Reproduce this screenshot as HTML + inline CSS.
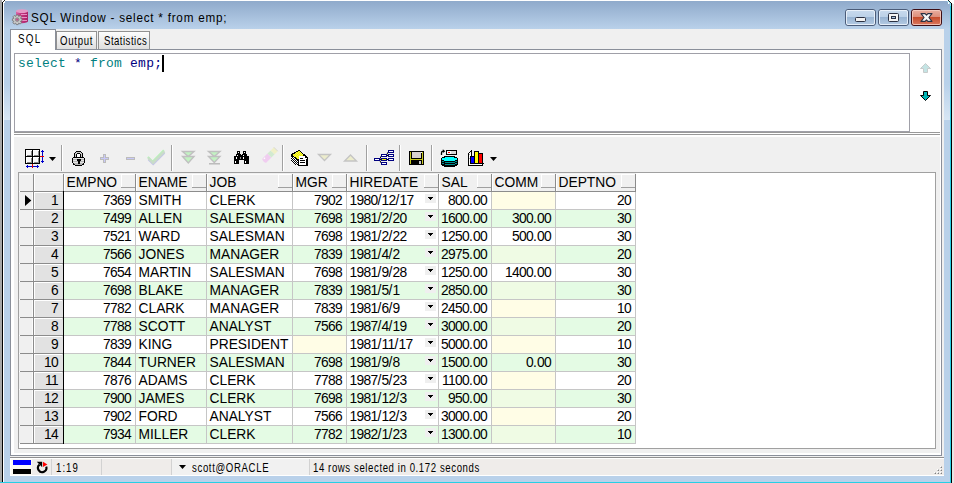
<!DOCTYPE html>
<html><head><meta charset="utf-8">
<style>
*{margin:0;padding:0;box-sizing:border-box}
html,body{width:954px;height:483px;overflow:hidden;background:#b9d1ea;font-family:"Liberation Sans",sans-serif}
.a{position:absolute}
#frame{left:0;top:0;width:954px;height:483px;background:#b9d1ea}
#title{left:4;top:1px;width:946px;height:28px;background:linear-gradient(#90abcb,#b9d1ea)}
.ttext{left:31px;top:10px;font-size:13px;letter-spacing:.85px;transform:scaleX(.9);transform-origin:0 0;color:#000;white-space:nowrap}
.wbtn{top:9px;height:17px;border:1px solid #4e6384;border-radius:3px;background:linear-gradient(#d5e3f1 0,#c5d8ec 50%,#a9c2de 50%,#b8cfe6 100%);box-shadow:inset 0 0 0 1px rgba(255,255,255,.55)}
.wbtn.close{border-color:#4a1515;background:linear-gradient(#e9a797 0,#df8b77 50%,#c4472c 50%,#d46e53 100%)}
.tab{font-size:12px;line-height:14px;color:#000;white-space:nowrap;transform:scaleX(.89);transform-origin:0 0}
.line{position:absolute}
.gc{position:absolute;font-size:13.8px;white-space:nowrap;color:#000;line-height:18px}
.r{text-align:right}
.gc i{font-style:normal;letter-spacing:-.674px}
.gc b{font-weight:normal;letter-spacing:.166px}
.sb{position:absolute;font-size:12px;line-height:14px;white-space:nowrap;color:#000;transform:scaleX(.89);transform-origin:0 0}
</style></head><body>
<div class="a" id="frame"></div>
<!-- outer left strip -->
<div class="a" style="left:0;top:0;width:2px;height:483px;background:#a8a8a8"></div>
<div class="a" style="left:2px;top:2px;width:1px;height:481px;background:#000"></div>
<div class="a" style="left:3px;top:3px;width:1px;height:480px;background:#fff"></div>
<div class="a" style="left:5px;top:0;width:945px;height:1px;background:#fff"></div>
<!-- right strip -->
<div class="a" style="left:950px;top:2px;width:1px;height:481px;background:#27cfe5"></div>
<div class="a" style="left:951px;top:2px;width:1px;height:481px;background:#000"></div>
<div class="a" style="left:952px;top:0;width:2px;height:483px;background:#e6e6e6"></div>
<div class="a" style="left:0;top:482px;width:951px;height:1px;background:#27cfe5"></div>
<div class="a" style="left:4px;top:84px;width:6px;height:36px;background:linear-gradient(#b9d1ea,#d8e6f4)"></div>
<div class="a" style="left:944px;top:84px;width:6px;height:36px;background:linear-gradient(#b9d1ea,#d8e6f4)"></div>
<!-- title gradient -->
<div class="a" style="left:4px;top:1px;width:946px;height:28px;background:linear-gradient(#8faacb,#b9d1ea)"></div>
<svg class="a" style="left:10px;top:7px" width="22" height="22" viewBox="0 0 22 22">
<defs><linearGradient id="cyl" x1="0" x2="1"><stop offset="0" stop-color="#d866a6"/><stop offset=".35" stop-color="#c83a84"/><stop offset="1" stop-color="#a82266"/></linearGradient></defs>
<path d="M6 4.2 V14.2 A6 2 0 0 0 18 14.2 V4.2 Z" fill="url(#cyl)"/>
<ellipse cx="12" cy="4.2" rx="6" ry="1.9" fill="#e49ac6"/>
<path d="M11 7.5h6M11 10.5h6M11 13.5h6" stroke="#e890c4" stroke-width="1"/>
<g transform="translate(7.2 12.6) scale(.93)">
<path d="M-1 -5h2l.6 1.6 1.6-1 1.4 1.4-1 1.6 1.6.6v2l-1.6.6 1 1.6-1.4 1.4-1.6-1-.6 1.6h-2l-.6-1.6-1.6 1-1.4-1.4 1-1.6-1.6-.6v-2l1.6-.6-1-1.6 1.4-1.4 1.6 1z" fill="#c8c8c8" stroke="#6a6a6a" stroke-width=".8"/>
<circle r="2" fill="#a0a0a0" stroke="#707070" stroke-width=".6"/>
<circle r="1.1" fill="#d04090"/>
</g></svg>
<svg class="a" style="left:0;top:0" width="954" height="6" shape-rendering="crispEdges">
<rect x="2" y="0" width="3" height="3" fill="#fff"/><rect x="4" y="0" width="1" height="1" fill="#202020"/><rect x="3" y="1" width="1" height="1" fill="#202020"/><rect x="2" y="2" width="1" height="1" fill="#000"/>
<rect x="948" y="0" width="6" height="4" fill="#fff"/><rect x="948" y="0" width="1" height="1" fill="#202020"/><rect x="949" y="1" width="1" height="1" fill="#202020"/><rect x="950" y="2" width="1" height="1" fill="#202020"/><rect x="951" y="3" width="1" height="1" fill="#000"/>
<rect x="947" y="1" width="2" height="1" fill="#a8e4f4"/><rect x="949" y="2" width="1" height="2" fill="#a8e4f4"/><rect x="950" y="3" width="1" height="3" fill="#80dcf2"/>
</svg>
<div class="a ttext">SQL Window - select * from emp;</div>
<svg class="a" style="left:840px;top:5px" width="106" height="24" viewBox="840 5 106 24">
<defs>
<linearGradient id="bb" x1="0" y1="0" x2="0" y2="1"><stop offset="0" stop-color="#c9dbee"/><stop offset=".45" stop-color="#bcd1e8"/><stop offset=".46" stop-color="#97b3d2"/><stop offset="1" stop-color="#b6cce4"/></linearGradient>
<linearGradient id="bc" x1="0" y1="0" x2="0" y2="1"><stop offset="0" stop-color="#eab0a2"/><stop offset=".45" stop-color="#dd8f7c"/><stop offset=".46" stop-color="#c44a2a"/><stop offset="1" stop-color="#dc7a62"/></linearGradient>
</defs>
<rect x="845.5" y="9.5" width="30" height="16" rx="2.5" fill="url(#bb)" stroke="#4b5c79"/>
<rect x="846.5" y="10.5" width="28" height="14" rx="1.5" fill="none" stroke="#eef4fb" stroke-opacity=".85"/>
<rect x="878.5" y="9.5" width="30" height="16" rx="2.5" fill="url(#bb)" stroke="#4b5c79"/>
<rect x="879.5" y="10.5" width="28" height="14" rx="1.5" fill="none" stroke="#eef4fb" stroke-opacity=".85"/>
<rect x="911.5" y="9.5" width="30" height="16" rx="2.5" fill="url(#bc)" stroke="#3d0d14"/>
<rect x="912.5" y="10.5" width="28" height="14" rx="1.5" fill="none" stroke="#f6d0c6" stroke-opacity=".8"/>
<rect x="855.5" y="17.5" width="10" height="4" rx="1" fill="#f2f2f2" stroke="#2b3142"/>
<rect x="888.5" y="13.5" width="10" height="8" rx="1" fill="#f4f4f4" stroke="#2b3142"/>
<rect x="891.5" y="16.5" width="4" height="2" fill="#a9c4e0" stroke="#2b3142"/>
<path d="M921 13.6H925.1L926.5 15.2 927.9 13.6H932L928.9 17.5 932 21.4H927.9L926.5 19.8 925.1 21.4H921L924.1 17.5Z" fill="#f8f8f8" stroke="#2b3042" stroke-width="1.1" stroke-linejoin="round"/>
</svg>
<!-- tab strip bg -->
<div class="a" style="left:10px;top:29px;width:934px;height:447px;background:#f0f0f0"></div>
<!-- tabs -->
<div class="a" style="left:56px;top:31px;width:41px;height:19px;border:1px solid #919191;border-bottom:none;background:linear-gradient(#fdfdfd,#dcdcdc)"></div>
<div class="a tab" style="left:60px;top:34px;transform:scaleX(.8);letter-spacing:.9px">Output</div>
<div class="a" style="left:98px;top:31px;width:52px;height:19px;border:1px solid #919191;border-bottom:none;background:linear-gradient(#fdfdfd,#dcdcdc)"></div>
<div class="a tab" style="left:104px;top:34px;transform:scaleX(.8);letter-spacing:.6px">Statistics</div>
<!-- panel -->
<div class="a" style="left:10px;top:49px;width:932px;height:407px;border:1px solid #8a8f9a;background:#f0f0f0"></div>
<div class="a" style="left:10px;top:29px;width:46px;height:22px;border:1px solid #8a8f9a;border-bottom:none;background:#fff"></div>
<div class="a tab" style="left:18px;top:32px;transform:scaleX(.82);letter-spacing:1.5px">SQL</div>
<!-- upper pane -->
<div class="a" style="left:11px;top:50px;width:930px;height:405px;background:#fff"></div>
<div class="a" style="left:14px;top:137px;width:926px;height:316px;background:#f0f0f0"></div>
<div class="a" style="left:14px;top:53px;width:896px;height:79px;border:1px solid #a0a0a8;background:#fff"></div>
<div class="a" style="left:14px;top:132px;width:926px;height:1px;background:#999"></div>
<div class="a" style="left:14px;top:134px;width:926px;height:1px;background:#999"></div>
<div class="a" style="left:18px;top:56px;font-family:'Liberation Mono',monospace;font-size:12px;letter-spacing:.21px;transform:scaleX(1.08);transform-origin:0 0;line-height:16px;white-space:pre"><span style="color:#008080">select</span> <span style="color:#000080">*</span> <span style="color:#008080">from</span> <span style="color:#000080">emp;</span></div>
<div class="a" style="left:162px;top:55px;width:2px;height:17px;background:#000"></div>

<svg class="a" style="left:914px;top:58px" width="24" height="48" viewBox="914 58 24 48">
<path d="M920.5 68.5L925.5 63.5 930.5 68.5H927.5V72.5H923.5V68.5Z" fill="#c4e4e4" stroke="#c8cccc" stroke-width="1"/>
<path d="M923.5 91.5H927.5V95.5H930.5L925.5 100.5 920.5 95.5H923.5Z" fill="#00b4b4" stroke="#000" stroke-width="1" stroke-linejoin="miter"/>
</svg>
<svg class="a" style="left:0;top:140px" width="520" height="32" viewBox="0 140 520 32" shape-rendering="crispEdges">
<!-- separators -->
<g fill="#a0a0a0"><rect x="61" y="145" width="1" height="26"/><rect x="171" y="145" width="1" height="26"/><rect x="282" y="145" width="1" height="26"/><rect x="366" y="145" width="1" height="26"/><rect x="399" y="145" width="1" height="26"/><rect x="431" y="145" width="1" height="26"/></g>
<g fill="#fff"><rect x="62" y="145" width="1" height="26"/><rect x="172" y="145" width="1" height="26"/><rect x="283" y="145" width="1" height="26"/><rect x="367" y="145" width="1" height="26"/><rect x="400" y="145" width="1" height="26"/><rect x="432" y="145" width="1" height="26"/></g>
<!-- grid icon -->
<rect x="25" y="149" width="15" height="15" fill="#000"/>
<g fill="#fff"><rect x="26" y="150" width="6" height="6"/><rect x="33" y="150" width="6" height="6"/><rect x="26" y="157" width="6" height="6"/><rect x="33" y="157" width="6" height="6"/></g>
<g fill="#8a8a8a"><rect x="27" y="155" width="5" height="1"/><rect x="31" y="151" width="1" height="5"/><rect x="34" y="155" width="5" height="1"/><rect x="38" y="151" width="1" height="5"/><rect x="27" y="162" width="5" height="1"/><rect x="31" y="158" width="1" height="5"/><rect x="34" y="162" width="5" height="1"/><rect x="38" y="158" width="1" height="5"/></g>
<g fill="#f8f8f8"><rect x="27" y="151" width="4" height="4"/><rect x="34" y="151" width="4" height="4"/><rect x="27" y="158" width="4" height="4"/><rect x="34" y="158" width="4" height="4"/></g>
<g fill="#0000cc"><rect x="42" y="150" width="1" height="13"/><rect x="41" y="151" width="3" height="1"/><rect x="41" y="161" width="3" height="1"/><rect x="26" y="166" width="13" height="1"/><rect x="27" y="165" width="1" height="3"/><rect x="37" y="165" width="1" height="3"/></g>
<g fill="#e00000"><rect x="40" y="156" width="4" height="1"/><rect x="32" y="164" width="1" height="4"/></g>
<path d="M49 157H56L52.5 161Z" fill="#000" shape-rendering="auto"/>
<!-- lock -->
<rect x="75" y="152" width="7" height="5" fill="#c8c8c8"/><rect x="77" y="154" width="3" height="3" fill="#fff"/><rect x="76" y="151" width="5" height="1" fill="#000"/><rect x="75" y="152" width="1" height="1" fill="#000"/><rect x="81" y="152" width="1" height="1" fill="#000"/><rect x="74" y="153" width="1" height="4" fill="#000"/><rect x="82" y="153" width="1" height="4" fill="#000"/><rect x="77" y="153" width="3" height="1" fill="#000"/><rect x="76" y="154" width="1" height="3" fill="#000"/><rect x="80" y="154" width="1" height="3" fill="#000"/><rect x="73" y="158" width="11" height="6" fill="#b4b4b4"/><rect x="73" y="158" width="11" height="1" fill="#e4e4e4"/><rect x="73" y="160" width="11" height="1" fill="#e4e4e4"/><rect x="73" y="162" width="11" height="1" fill="#e4e4e4"/><rect x="74" y="164" width="9" height="1" fill="#b4b4b4"/><rect x="73" y="157" width="11" height="1" fill="#000"/><rect x="72" y="158" width="1" height="5" fill="#000"/><rect x="84" y="158" width="1" height="5" fill="#000"/><rect x="73" y="163" width="1" height="1" fill="#000"/><rect x="83" y="163" width="1" height="1" fill="#000"/><rect x="73" y="164" width="2" height="1" fill="#000"/><rect x="82" y="164" width="2" height="1" fill="#000"/><rect x="75" y="165" width="7" height="1" fill="#000"/><rect x="77" y="159" width="4" height="2" fill="#000"/><rect x="78" y="161" width="2" height="3" fill="#000"/>
<!-- plus / minus -->
<rect x="103" y="154" width="3" height="9" fill="#bcbcbc"/><rect x="100" y="157" width="9" height="3" fill="#bcbcbc"/>
<rect x="104" y="155" width="1" height="7" fill="#c8c8f8"/><rect x="101" y="158" width="7" height="1" fill="#c8c8f8"/>
<rect x="126" y="157" width="9" height="3" fill="#bcbcbc"/><rect x="127" y="158" width="7" height="1" fill="#c8c8f8"/>
<!-- check -->
<g shape-rendering="auto" fill="none" stroke-linecap="square">
<path d="M149.2 160.2L153.2 164.2 163.8 153.6" stroke="#c4c4ea" stroke-width="2"/>
<path d="M148.6 157.6L152.6 161.6 163.2 151" stroke="#b8f2b8" stroke-width="2"/>
<path d="M149 158.8L153 162.8 163.6 152.2" stroke="#c9dcc9" stroke-width="2.4"/>
</g>
<!-- double triangles -->
<g shape-rendering="auto" stroke="#c0c0c0" stroke-width="1.4" fill="#c2f2c2" stroke-linejoin="miter">
<path d="M182.5 151.5H194L188.3 156.5Z"/><path d="M182.5 156.5H194L188.3 163Z"/>
<path d="M208.5 151.5H220L214.3 156.5Z"/><path d="M208.5 156.5H220L214.3 162.5Z"/>
</g>
<rect x="209" y="163" width="11" height="1" fill="#bcbcbc"/><rect x="209" y="164" width="11" height="1" fill="#d4d4d4"/>
<!-- binoculars -->
<rect x="237" y="151" width="3" height="3" fill="#000"/><rect x="243" y="151" width="3" height="3" fill="#000"/><rect x="236" y="154" width="5" height="2" fill="#000"/><rect x="242" y="154" width="5" height="2" fill="#000"/><rect x="241" y="155" width="1" height="1" fill="#000"/><rect x="234" y="156" width="5" height="8" fill="#000"/><rect x="244" y="156" width="5" height="8" fill="#000"/><rect x="239" y="156" width="5" height="4" fill="#000"/><rect x="238" y="152" width="1" height="1" fill="#fff"/><rect x="244" y="152" width="1" height="1" fill="#fff"/><rect x="237" y="155" width="1" height="1" fill="#fff"/><rect x="243" y="155" width="1" height="1" fill="#fff"/><rect x="236" y="157" width="1" height="1" fill="#fff"/><rect x="236" y="158" width="1" height="1" fill="#fff"/><rect x="243" y="157" width="1" height="1" fill="#fff"/><rect x="243" y="158" width="1" height="1" fill="#fff"/><rect x="235" y="161" width="1" height="1" fill="#fff"/><rect x="235" y="162" width="1" height="1" fill="#fff"/><rect x="245" y="161" width="1" height="1" fill="#fff"/><rect x="245" y="162" width="1" height="1" fill="#fff"/><rect x="240" y="157" width="1" height="2" fill="#909090"/>
<!-- eraser (disabled) -->
<g shape-rendering="auto" transform="translate(270.5 154.5) rotate(-45)">
<path d="M-8.5 -2.8H-1.5V2.8H-8.5Q-9.8 2.8 -9.8 0Q-9.8 -2.8 -8.5 -2.8Z" fill="#f0cdf0"/>
<rect x="-1.5" y="-2.8" width="4.5" height="5.6" fill="#d2ead0"/>
<rect x="3" y="-2.8" width="4.5" height="5.6" fill="#f0f0c8"/>
<path d="M7.5 -2.8V2.8M-8 -1.2H-6" stroke="#d0d0d0" stroke-width=".8"/>
<path d="M-8 -1.5H-6" stroke="#fff" stroke-width="1"/>
</g>
<!-- stack of papers -->
<defs><pattern id="chk" width="2" height="2" patternUnits="userSpaceOnUse"><rect width="1" height="1" fill="#fff"/><rect x="1" y="1" width="1" height="1" fill="#fff"/></pattern></defs>
<path d="M291 154L299 150 308 157V166H298L291 162Z" fill="#000"/>
<path d="M292 155L299 151 304 155 298 159Z" fill="#f0f000"/>
<path d="M292 155L299 151 304 155 298 159Z" fill="url(#chk)" opacity=".3"/>
<path d="M291 156L298 160V166L291 162Z" fill="url(#chk)"/>
<rect x="299" y="156" width="7" height="9" fill="#fff"/>
<rect x="305" y="156" width="1" height="2" fill="#000"/><rect x="306" y="158" width="1" height="1" fill="#fff"/>
<rect x="300" y="158" width="3" height="1" fill="#000"/>
<rect x="300" y="160" width="5" height="1" fill="#000"/>
<rect x="300" y="162" width="5" height="1" fill="#000"/>
<!-- up/down triangles disabled -->
<g shape-rendering="auto" stroke="#c4c4c4" stroke-width="1.3" fill="#ececcc">
<path d="M318.5 154.5H330.5L324.5 160.5Z"/>
<path d="M344.5 161H356.5L350.5 155Z"/>
</g>
<!-- tree -->
<g shape-rendering="auto" stroke="#000" stroke-width="1" fill="none">
<path d="M379.5 159.5L381.5 155.5M379.5 159.5H381M379.5 160L381.5 163.5M386.5 155.5H388M386.5 159.5H388M386.5 155L388.5 151.5"/>
</g>
<g fill="#000080">
<rect x="374" y="158" width="6" height="3"/><rect x="381" y="154" width="6" height="3"/><rect x="381" y="158" width="6" height="3"/><rect x="381" y="162" width="6" height="3"/>
<rect x="388" y="150" width="6" height="3"/><rect x="388" y="154" width="6" height="3"/><rect x="388" y="158" width="6" height="3"/>
</g>
<g fill="#fff">
<rect x="375" y="159" width="4" height="1"/><rect x="382" y="155" width="4" height="1"/><rect x="382" y="163" width="4" height="1"/>
<rect x="389" y="151" width="4" height="1"/><rect x="389" y="155" width="4" height="1"/><rect x="389" y="159" width="4" height="1"/>
</g>
<rect x="382" y="159" width="4" height="1" fill="#f0f000"/>
<!-- floppy -->
<rect x="409" y="151" width="15" height="14" fill="#000"/>
<rect x="410" y="152" width="13" height="12" fill="#c8c820"/>
<rect x="411" y="152" width="11" height="7" fill="#000"/>
<rect x="412" y="152" width="9" height="6" fill="#d8d0d0"/>
<rect x="411" y="160" width="11" height="4" fill="#000"/>
<rect x="419" y="161" width="2" height="3" fill="#c8c8c8"/>
<rect x="421" y="152" width="1" height="1" fill="#fff"/>
<!-- db icon -->
<g shape-rendering="auto">
<path d="M441.5 155V152.8Q441.5 151.2 443.3 151.2" fill="none" stroke="#000" stroke-width="1.3"/>
<path d="M442.8 149.3L445.3 151.2 442.8 153.1Z" fill="#000"/>
</g>
<rect x="446" y="150" width="11" height="5" fill="#000"/>
<rect x="447" y="151" width="9" height="3" fill="#d8d8d8"/>
<rect x="447" y="151" width="4" height="3" fill="#fafafa"/>
<rect x="448" y="152" width="2" height="1" fill="#ff0000"/>
<g fill="#000">
<rect x="444" y="156" width="11" height="1"/><rect x="442" y="157" width="15" height="1"/><rect x="441" y="158" width="17" height="7"/><rect x="442" y="165" width="15" height="1"/><rect x="444" y="166" width="11" height="1"/>
</g>
<g fill="#00ffff">
<rect x="445" y="157" width="9" height="1"/><rect x="442" y="158" width="15" height="2"/><rect x="444" y="160" width="11" height="1"/>
</g>
<g fill="#008c8c">
<rect x="442" y="161" width="2" height="1"/><rect x="445" y="162" width="10" height="1"/><rect x="455" y="161" width="2" height="1"/>
<rect x="442" y="163" width="2" height="1"/><rect x="445" y="164" width="10" height="1"/><rect x="455" y="163" width="2" height="1"/>
</g>
<!-- chart icon -->
<rect x="469" y="153" width="2" height="11" fill="#fff"/>
<rect x="469" y="154" width="1" height="1" fill="#b0b0b0"/><rect x="470" y="156" width="1" height="1" fill="#b0b0b0"/><rect x="469" y="158" width="1" height="1" fill="#b0b0b0"/>
<path d="M468.5 153.5L471.5 150.5" stroke="#000" stroke-width="1" shape-rendering="auto"/>
<rect x="468" y="153" width="1" height="13" fill="#000"/>
<rect x="471" y="150" width="1" height="7" fill="#000"/>
<rect x="468" y="165" width="15" height="1" fill="#000"/>
<rect x="469" y="164" width="13" height="1" fill="#fff"/>
<rect x="482" y="164" width="1" height="1" fill="#000"/><rect x="483" y="163" width="1" height="1" fill="#000"/>
<rect x="470" y="156" width="5" height="8" fill="#000"/><rect x="471" y="157" width="3" height="6" fill="#0000ff"/>
<rect x="474" y="151" width="5" height="13" fill="#000"/><rect x="475" y="152" width="3" height="11" fill="#ffff00"/>
<rect x="478" y="153" width="5" height="11" fill="#000"/><rect x="479" y="154" width="3" height="9" fill="#ff0000"/>
<path d="M490 157H497L493.5 161Z" fill="#000" shape-rendering="auto"/>
</svg>
<!-- grid -->
<div class="a" style="left:18px;top:172px;width:918px;height:277px;border:1px solid #a0a0a0;background:#fff"></div>
<div class="a" style="left:19px;top:173px;width:617px;height:18px;background:#f0f0f0"></div>
<div class="a" style="left:64px;top:174px;width:1px;height:17px;background:#fff"></div>
<div class="a" style="left:136px;top:174px;width:1px;height:17px;background:#fff"></div>
<div class="a" style="left:207px;top:174px;width:1px;height:17px;background:#fff"></div>
<div class="a" style="left:293px;top:174px;width:1px;height:17px;background:#fff"></div>
<div class="a" style="left:347px;top:174px;width:1px;height:17px;background:#fff"></div>
<div class="a" style="left:439px;top:174px;width:1px;height:17px;background:#fff"></div>
<div class="a" style="left:492px;top:174px;width:1px;height:17px;background:#fff"></div>
<div class="a" style="left:556px;top:174px;width:1px;height:17px;background:#fff"></div>
<div class="a" style="left:20px;top:174px;width:616px;height:1px;background:#fafafa"></div>
<div class="a" style="left:34px;top:174px;width:1px;height:17px;background:#fff"></div>
<div class="a" style="left:64px;top:192px;width:571px;height:17px;background:#fff"></div>
<div class="a" style="left:492px;top:192px;width:63px;height:17px;background:#fffde6"></div>
<div class="a" style="left:19px;top:192px;width:14px;height:17px;background:#f0f0f0"></div>
<div class="a" style="left:32px;top:192px;width:1px;height:17px;background:#fcfcfc"></div>
<div class="a" style="left:34px;top:192px;width:29px;height:17px;background:#e2e2e2"></div>
<div class="a" style="left:34px;top:192px;width:28px;height:1px;background:#fff"></div>
<div class="a" style="left:34px;top:192px;width:1px;height:17px;background:#fff"></div>
<div class="a" style="left:64px;top:210px;width:571px;height:17px;background:#e4fbe4"></div>
<div class="a" style="left:19px;top:210px;width:14px;height:17px;background:#f0f0f0"></div>
<div class="a" style="left:32px;top:210px;width:1px;height:17px;background:#fcfcfc"></div>
<div class="a" style="left:34px;top:210px;width:29px;height:17px;background:#e2e2e2"></div>
<div class="a" style="left:34px;top:210px;width:28px;height:1px;background:#fff"></div>
<div class="a" style="left:34px;top:210px;width:1px;height:17px;background:#fff"></div>
<div class="a" style="left:64px;top:228px;width:571px;height:17px;background:#fff"></div>
<div class="a" style="left:19px;top:228px;width:14px;height:17px;background:#f0f0f0"></div>
<div class="a" style="left:32px;top:228px;width:1px;height:17px;background:#fcfcfc"></div>
<div class="a" style="left:34px;top:228px;width:29px;height:17px;background:#e2e2e2"></div>
<div class="a" style="left:34px;top:228px;width:28px;height:1px;background:#fff"></div>
<div class="a" style="left:34px;top:228px;width:1px;height:17px;background:#fff"></div>
<div class="a" style="left:64px;top:246px;width:571px;height:17px;background:#e4fbe4"></div>
<div class="a" style="left:492px;top:246px;width:63px;height:17px;background:#effbe4"></div>
<div class="a" style="left:19px;top:246px;width:14px;height:17px;background:#f0f0f0"></div>
<div class="a" style="left:32px;top:246px;width:1px;height:17px;background:#fcfcfc"></div>
<div class="a" style="left:34px;top:246px;width:29px;height:17px;background:#e2e2e2"></div>
<div class="a" style="left:34px;top:246px;width:28px;height:1px;background:#fff"></div>
<div class="a" style="left:34px;top:246px;width:1px;height:17px;background:#fff"></div>
<div class="a" style="left:64px;top:264px;width:571px;height:17px;background:#fff"></div>
<div class="a" style="left:19px;top:264px;width:14px;height:17px;background:#f0f0f0"></div>
<div class="a" style="left:32px;top:264px;width:1px;height:17px;background:#fcfcfc"></div>
<div class="a" style="left:34px;top:264px;width:29px;height:17px;background:#e2e2e2"></div>
<div class="a" style="left:34px;top:264px;width:28px;height:1px;background:#fff"></div>
<div class="a" style="left:34px;top:264px;width:1px;height:17px;background:#fff"></div>
<div class="a" style="left:64px;top:282px;width:571px;height:17px;background:#e4fbe4"></div>
<div class="a" style="left:492px;top:282px;width:63px;height:17px;background:#effbe4"></div>
<div class="a" style="left:19px;top:282px;width:14px;height:17px;background:#f0f0f0"></div>
<div class="a" style="left:32px;top:282px;width:1px;height:17px;background:#fcfcfc"></div>
<div class="a" style="left:34px;top:282px;width:29px;height:17px;background:#e2e2e2"></div>
<div class="a" style="left:34px;top:282px;width:28px;height:1px;background:#fff"></div>
<div class="a" style="left:34px;top:282px;width:1px;height:17px;background:#fff"></div>
<div class="a" style="left:64px;top:300px;width:571px;height:17px;background:#fff"></div>
<div class="a" style="left:492px;top:300px;width:63px;height:17px;background:#fffde6"></div>
<div class="a" style="left:19px;top:300px;width:14px;height:17px;background:#f0f0f0"></div>
<div class="a" style="left:32px;top:300px;width:1px;height:17px;background:#fcfcfc"></div>
<div class="a" style="left:34px;top:300px;width:29px;height:17px;background:#e2e2e2"></div>
<div class="a" style="left:34px;top:300px;width:28px;height:1px;background:#fff"></div>
<div class="a" style="left:34px;top:300px;width:1px;height:17px;background:#fff"></div>
<div class="a" style="left:64px;top:318px;width:571px;height:17px;background:#e4fbe4"></div>
<div class="a" style="left:492px;top:318px;width:63px;height:17px;background:#effbe4"></div>
<div class="a" style="left:19px;top:318px;width:14px;height:17px;background:#f0f0f0"></div>
<div class="a" style="left:32px;top:318px;width:1px;height:17px;background:#fcfcfc"></div>
<div class="a" style="left:34px;top:318px;width:29px;height:17px;background:#e2e2e2"></div>
<div class="a" style="left:34px;top:318px;width:28px;height:1px;background:#fff"></div>
<div class="a" style="left:34px;top:318px;width:1px;height:17px;background:#fff"></div>
<div class="a" style="left:64px;top:336px;width:571px;height:17px;background:#fff"></div>
<div class="a" style="left:293px;top:336px;width:53px;height:17px;background:#fffde6"></div>
<div class="a" style="left:492px;top:336px;width:63px;height:17px;background:#fffde6"></div>
<div class="a" style="left:19px;top:336px;width:14px;height:17px;background:#f0f0f0"></div>
<div class="a" style="left:32px;top:336px;width:1px;height:17px;background:#fcfcfc"></div>
<div class="a" style="left:34px;top:336px;width:29px;height:17px;background:#e2e2e2"></div>
<div class="a" style="left:34px;top:336px;width:28px;height:1px;background:#fff"></div>
<div class="a" style="left:34px;top:336px;width:1px;height:17px;background:#fff"></div>
<div class="a" style="left:64px;top:354px;width:571px;height:17px;background:#e4fbe4"></div>
<div class="a" style="left:19px;top:354px;width:14px;height:17px;background:#f0f0f0"></div>
<div class="a" style="left:32px;top:354px;width:1px;height:17px;background:#fcfcfc"></div>
<div class="a" style="left:34px;top:354px;width:29px;height:17px;background:#e2e2e2"></div>
<div class="a" style="left:34px;top:354px;width:28px;height:1px;background:#fff"></div>
<div class="a" style="left:34px;top:354px;width:1px;height:17px;background:#fff"></div>
<div class="a" style="left:64px;top:372px;width:571px;height:17px;background:#fff"></div>
<div class="a" style="left:492px;top:372px;width:63px;height:17px;background:#fffde6"></div>
<div class="a" style="left:19px;top:372px;width:14px;height:17px;background:#f0f0f0"></div>
<div class="a" style="left:32px;top:372px;width:1px;height:17px;background:#fcfcfc"></div>
<div class="a" style="left:34px;top:372px;width:29px;height:17px;background:#e2e2e2"></div>
<div class="a" style="left:34px;top:372px;width:28px;height:1px;background:#fff"></div>
<div class="a" style="left:34px;top:372px;width:1px;height:17px;background:#fff"></div>
<div class="a" style="left:64px;top:390px;width:571px;height:17px;background:#e4fbe4"></div>
<div class="a" style="left:492px;top:390px;width:63px;height:17px;background:#effbe4"></div>
<div class="a" style="left:19px;top:390px;width:14px;height:17px;background:#f0f0f0"></div>
<div class="a" style="left:32px;top:390px;width:1px;height:17px;background:#fcfcfc"></div>
<div class="a" style="left:34px;top:390px;width:29px;height:17px;background:#e2e2e2"></div>
<div class="a" style="left:34px;top:390px;width:28px;height:1px;background:#fff"></div>
<div class="a" style="left:34px;top:390px;width:1px;height:17px;background:#fff"></div>
<div class="a" style="left:64px;top:408px;width:571px;height:17px;background:#fff"></div>
<div class="a" style="left:492px;top:408px;width:63px;height:17px;background:#fffde6"></div>
<div class="a" style="left:19px;top:408px;width:14px;height:17px;background:#f0f0f0"></div>
<div class="a" style="left:32px;top:408px;width:1px;height:17px;background:#fcfcfc"></div>
<div class="a" style="left:34px;top:408px;width:29px;height:17px;background:#e2e2e2"></div>
<div class="a" style="left:34px;top:408px;width:28px;height:1px;background:#fff"></div>
<div class="a" style="left:34px;top:408px;width:1px;height:17px;background:#fff"></div>
<div class="a" style="left:64px;top:426px;width:571px;height:17px;background:#e4fbe4"></div>
<div class="a" style="left:492px;top:426px;width:63px;height:17px;background:#effbe4"></div>
<div class="a" style="left:19px;top:426px;width:14px;height:17px;background:#f0f0f0"></div>
<div class="a" style="left:32px;top:426px;width:1px;height:17px;background:#fcfcfc"></div>
<div class="a" style="left:34px;top:426px;width:29px;height:17px;background:#e2e2e2"></div>
<div class="a" style="left:34px;top:426px;width:28px;height:1px;background:#fff"></div>
<div class="a" style="left:34px;top:426px;width:1px;height:17px;background:#fff"></div>
<div class="a" style="left:20px;top:191px;width:616px;height:1px;background:#8c8c8c"></div>
<div class="a" style="left:20px;top:209px;width:43px;height:1px;background:#8c8c8c"></div>
<div class="a" style="left:64px;top:209px;width:572px;height:1px;background:#c6c6c6"></div>
<div class="a" style="left:20px;top:227px;width:43px;height:1px;background:#8c8c8c"></div>
<div class="a" style="left:64px;top:227px;width:572px;height:1px;background:#c6c6c6"></div>
<div class="a" style="left:20px;top:245px;width:43px;height:1px;background:#8c8c8c"></div>
<div class="a" style="left:64px;top:245px;width:572px;height:1px;background:#c6c6c6"></div>
<div class="a" style="left:20px;top:263px;width:43px;height:1px;background:#8c8c8c"></div>
<div class="a" style="left:64px;top:263px;width:572px;height:1px;background:#c6c6c6"></div>
<div class="a" style="left:20px;top:281px;width:43px;height:1px;background:#8c8c8c"></div>
<div class="a" style="left:64px;top:281px;width:572px;height:1px;background:#c6c6c6"></div>
<div class="a" style="left:20px;top:299px;width:43px;height:1px;background:#8c8c8c"></div>
<div class="a" style="left:64px;top:299px;width:572px;height:1px;background:#c6c6c6"></div>
<div class="a" style="left:20px;top:317px;width:43px;height:1px;background:#8c8c8c"></div>
<div class="a" style="left:64px;top:317px;width:572px;height:1px;background:#c6c6c6"></div>
<div class="a" style="left:20px;top:335px;width:43px;height:1px;background:#8c8c8c"></div>
<div class="a" style="left:64px;top:335px;width:572px;height:1px;background:#c6c6c6"></div>
<div class="a" style="left:20px;top:353px;width:43px;height:1px;background:#8c8c8c"></div>
<div class="a" style="left:64px;top:353px;width:572px;height:1px;background:#c6c6c6"></div>
<div class="a" style="left:20px;top:371px;width:43px;height:1px;background:#8c8c8c"></div>
<div class="a" style="left:64px;top:371px;width:572px;height:1px;background:#c6c6c6"></div>
<div class="a" style="left:20px;top:389px;width:43px;height:1px;background:#8c8c8c"></div>
<div class="a" style="left:64px;top:389px;width:572px;height:1px;background:#c6c6c6"></div>
<div class="a" style="left:20px;top:407px;width:43px;height:1px;background:#8c8c8c"></div>
<div class="a" style="left:64px;top:407px;width:572px;height:1px;background:#c6c6c6"></div>
<div class="a" style="left:20px;top:425px;width:43px;height:1px;background:#8c8c8c"></div>
<div class="a" style="left:64px;top:425px;width:572px;height:1px;background:#c6c6c6"></div>
<div class="a" style="left:20px;top:443px;width:43px;height:1px;background:#8c8c8c"></div>
<div class="a" style="left:64px;top:443px;width:572px;height:1px;background:#c6c6c6"></div>
<div class="a" style="left:33px;top:174px;width:1px;height:270px;background:#8c8c8c"></div>
<div class="a" style="left:63px;top:174px;width:1px;height:17px;background:#8c8c8c"></div>
<div class="a" style="left:63px;top:191px;width:1px;height:253px;background:#000"></div>
<div class="a" style="left:135px;top:174px;width:1px;height:17px;background:#8c8c8c"></div>
<div class="a" style="left:135px;top:192px;width:1px;height:252px;background:#c6c6c6"></div>
<div class="a" style="left:206px;top:174px;width:1px;height:17px;background:#8c8c8c"></div>
<div class="a" style="left:206px;top:192px;width:1px;height:252px;background:#c6c6c6"></div>
<div class="a" style="left:292px;top:174px;width:1px;height:17px;background:#8c8c8c"></div>
<div class="a" style="left:292px;top:192px;width:1px;height:252px;background:#c6c6c6"></div>
<div class="a" style="left:346px;top:174px;width:1px;height:17px;background:#8c8c8c"></div>
<div class="a" style="left:346px;top:192px;width:1px;height:252px;background:#c6c6c6"></div>
<div class="a" style="left:438px;top:174px;width:1px;height:17px;background:#8c8c8c"></div>
<div class="a" style="left:438px;top:192px;width:1px;height:252px;background:#c6c6c6"></div>
<div class="a" style="left:491px;top:174px;width:1px;height:17px;background:#8c8c8c"></div>
<div class="a" style="left:491px;top:192px;width:1px;height:252px;background:#c6c6c6"></div>
<div class="a" style="left:555px;top:174px;width:1px;height:17px;background:#8c8c8c"></div>
<div class="a" style="left:555px;top:192px;width:1px;height:252px;background:#c6c6c6"></div>
<div class="a" style="left:635px;top:174px;width:1px;height:17px;background:#8c8c8c"></div>
<div class="a" style="left:635px;top:192px;width:1px;height:252px;background:#c6c6c6"></div>
<div class="gc" style="left:66.5px;top:174px">EMPNO</div>
<div class="a" style="left:121px;top:174px;width:13px;height:1px;background:#fff"></div>
<div class="a" style="left:121px;top:174px;width:1px;height:14px;background:#fff"></div>
<div class="a" style="left:121px;top:187px;width:14px;height:1px;background:#a0a0a0"></div>
<div class="gc" style="left:138.5px;top:174px">ENAME</div>
<div class="a" style="left:192px;top:174px;width:13px;height:1px;background:#fff"></div>
<div class="a" style="left:192px;top:174px;width:1px;height:14px;background:#fff"></div>
<div class="a" style="left:192px;top:187px;width:14px;height:1px;background:#a0a0a0"></div>
<div class="gc" style="left:209.5px;top:174px">JOB</div>
<div class="a" style="left:278px;top:174px;width:13px;height:1px;background:#fff"></div>
<div class="a" style="left:278px;top:174px;width:1px;height:14px;background:#fff"></div>
<div class="a" style="left:278px;top:187px;width:14px;height:1px;background:#a0a0a0"></div>
<div class="gc" style="left:295.5px;top:174px">MGR</div>
<div class="a" style="left:332px;top:174px;width:13px;height:1px;background:#fff"></div>
<div class="a" style="left:332px;top:174px;width:1px;height:14px;background:#fff"></div>
<div class="a" style="left:332px;top:187px;width:14px;height:1px;background:#a0a0a0"></div>
<div class="gc" style="left:349.5px;top:174px">HIREDATE</div>
<div class="a" style="left:424px;top:174px;width:13px;height:1px;background:#fff"></div>
<div class="a" style="left:424px;top:174px;width:1px;height:14px;background:#fff"></div>
<div class="a" style="left:424px;top:187px;width:14px;height:1px;background:#a0a0a0"></div>
<div class="gc" style="left:441.5px;top:174px">SAL</div>
<div class="a" style="left:477px;top:174px;width:13px;height:1px;background:#fff"></div>
<div class="a" style="left:477px;top:174px;width:1px;height:14px;background:#fff"></div>
<div class="a" style="left:477px;top:187px;width:14px;height:1px;background:#a0a0a0"></div>
<div class="gc" style="left:494.5px;top:174px">COMM</div>
<div class="a" style="left:541px;top:174px;width:13px;height:1px;background:#fff"></div>
<div class="a" style="left:541px;top:174px;width:1px;height:14px;background:#fff"></div>
<div class="a" style="left:541px;top:187px;width:14px;height:1px;background:#a0a0a0"></div>
<div class="gc" style="left:558.5px;top:174px">DEPTNO</div>
<div class="a" style="left:621px;top:174px;width:13px;height:1px;background:#fff"></div>
<div class="a" style="left:621px;top:174px;width:1px;height:14px;background:#fff"></div>
<div class="a" style="left:621px;top:187px;width:14px;height:1px;background:#a0a0a0"></div>
<div class="gc r" style="left:34px;top:192px;width:24px"><i>1</i></div>
<div class="gc r" style="left:63px;top:192px;width:68px"><i>7369</i></div>
<div class="gc" style="left:138.5px;top:192px">SMITH</div>
<div class="gc" style="left:209.5px;top:192px">CLERK</div>
<div class="gc r" style="left:292px;top:192px;width:50px"><i>7902</i></div>
<div class="gc" style="left:349.5px;top:192px"><i>1980</i><b>/</b><i>12</i><b>/</b><i>17</i></div>
<div class="gc r" style="left:438px;top:192px;width:49px"><i>800</i><b>.</b><i>00</i></div>
<div class="gc r" style="left:555px;top:192px;width:76px"><i>20</i></div>
<div class="a" style="left:425px;top:194px;width:11px;height:9px;background:#efefef"></div>
<div class="a" style="left:428px;top:197px;width:5px;height:1px;background:#000"></div>
<div class="a" style="left:429px;top:198px;width:3px;height:1px;background:#000"></div>
<div class="a" style="left:430px;top:199px;width:1px;height:1px;background:#000"></div>
<div class="gc r" style="left:34px;top:210px;width:24px"><i>2</i></div>
<div class="gc r" style="left:63px;top:210px;width:68px"><i>7499</i></div>
<div class="gc" style="left:138.5px;top:210px">ALLEN</div>
<div class="gc" style="left:209.5px;top:210px">SALESMAN</div>
<div class="gc r" style="left:292px;top:210px;width:50px"><i>7698</i></div>
<div class="gc" style="left:349.5px;top:210px"><i>1981</i><b>/</b><i>2</i><b>/</b><i>20</i></div>
<div class="gc r" style="left:438px;top:210px;width:49px"><i>1600</i><b>.</b><i>00</i></div>
<div class="gc r" style="left:491px;top:210px;width:60px"><i>300</i><b>.</b><i>00</i></div>
<div class="gc r" style="left:555px;top:210px;width:76px"><i>30</i></div>
<div class="a" style="left:425px;top:212px;width:11px;height:9px;background:#efefef"></div>
<div class="a" style="left:428px;top:215px;width:5px;height:1px;background:#000"></div>
<div class="a" style="left:429px;top:216px;width:3px;height:1px;background:#000"></div>
<div class="a" style="left:430px;top:217px;width:1px;height:1px;background:#000"></div>
<div class="gc r" style="left:34px;top:228px;width:24px"><i>3</i></div>
<div class="gc r" style="left:63px;top:228px;width:68px"><i>7521</i></div>
<div class="gc" style="left:138.5px;top:228px">WARD</div>
<div class="gc" style="left:209.5px;top:228px">SALESMAN</div>
<div class="gc r" style="left:292px;top:228px;width:50px"><i>7698</i></div>
<div class="gc" style="left:349.5px;top:228px"><i>1981</i><b>/</b><i>2</i><b>/</b><i>22</i></div>
<div class="gc r" style="left:438px;top:228px;width:49px"><i>1250</i><b>.</b><i>00</i></div>
<div class="gc r" style="left:491px;top:228px;width:60px"><i>500</i><b>.</b><i>00</i></div>
<div class="gc r" style="left:555px;top:228px;width:76px"><i>30</i></div>
<div class="a" style="left:425px;top:230px;width:11px;height:9px;background:#efefef"></div>
<div class="a" style="left:428px;top:233px;width:5px;height:1px;background:#000"></div>
<div class="a" style="left:429px;top:234px;width:3px;height:1px;background:#000"></div>
<div class="a" style="left:430px;top:235px;width:1px;height:1px;background:#000"></div>
<div class="gc r" style="left:34px;top:246px;width:24px"><i>4</i></div>
<div class="gc r" style="left:63px;top:246px;width:68px"><i>7566</i></div>
<div class="gc" style="left:138.5px;top:246px">JONES</div>
<div class="gc" style="left:209.5px;top:246px">MANAGER</div>
<div class="gc r" style="left:292px;top:246px;width:50px"><i>7839</i></div>
<div class="gc" style="left:349.5px;top:246px"><i>1981</i><b>/</b><i>4</i><b>/</b><i>2</i></div>
<div class="gc r" style="left:438px;top:246px;width:49px"><i>2975</i><b>.</b><i>00</i></div>
<div class="gc r" style="left:555px;top:246px;width:76px"><i>20</i></div>
<div class="a" style="left:425px;top:248px;width:11px;height:9px;background:#efefef"></div>
<div class="a" style="left:428px;top:251px;width:5px;height:1px;background:#000"></div>
<div class="a" style="left:429px;top:252px;width:3px;height:1px;background:#000"></div>
<div class="a" style="left:430px;top:253px;width:1px;height:1px;background:#000"></div>
<div class="gc r" style="left:34px;top:264px;width:24px"><i>5</i></div>
<div class="gc r" style="left:63px;top:264px;width:68px"><i>7654</i></div>
<div class="gc" style="left:138.5px;top:264px">MARTIN</div>
<div class="gc" style="left:209.5px;top:264px">SALESMAN</div>
<div class="gc r" style="left:292px;top:264px;width:50px"><i>7698</i></div>
<div class="gc" style="left:349.5px;top:264px"><i>1981</i><b>/</b><i>9</i><b>/</b><i>28</i></div>
<div class="gc r" style="left:438px;top:264px;width:49px"><i>1250</i><b>.</b><i>00</i></div>
<div class="gc r" style="left:491px;top:264px;width:60px"><i>1400</i><b>.</b><i>00</i></div>
<div class="gc r" style="left:555px;top:264px;width:76px"><i>30</i></div>
<div class="a" style="left:425px;top:266px;width:11px;height:9px;background:#efefef"></div>
<div class="a" style="left:428px;top:269px;width:5px;height:1px;background:#000"></div>
<div class="a" style="left:429px;top:270px;width:3px;height:1px;background:#000"></div>
<div class="a" style="left:430px;top:271px;width:1px;height:1px;background:#000"></div>
<div class="gc r" style="left:34px;top:282px;width:24px"><i>6</i></div>
<div class="gc r" style="left:63px;top:282px;width:68px"><i>7698</i></div>
<div class="gc" style="left:138.5px;top:282px">BLAKE</div>
<div class="gc" style="left:209.5px;top:282px">MANAGER</div>
<div class="gc r" style="left:292px;top:282px;width:50px"><i>7839</i></div>
<div class="gc" style="left:349.5px;top:282px"><i>1981</i><b>/</b><i>5</i><b>/</b><i>1</i></div>
<div class="gc r" style="left:438px;top:282px;width:49px"><i>2850</i><b>.</b><i>00</i></div>
<div class="gc r" style="left:555px;top:282px;width:76px"><i>30</i></div>
<div class="a" style="left:425px;top:284px;width:11px;height:9px;background:#efefef"></div>
<div class="a" style="left:428px;top:287px;width:5px;height:1px;background:#000"></div>
<div class="a" style="left:429px;top:288px;width:3px;height:1px;background:#000"></div>
<div class="a" style="left:430px;top:289px;width:1px;height:1px;background:#000"></div>
<div class="gc r" style="left:34px;top:300px;width:24px"><i>7</i></div>
<div class="gc r" style="left:63px;top:300px;width:68px"><i>7782</i></div>
<div class="gc" style="left:138.5px;top:300px">CLARK</div>
<div class="gc" style="left:209.5px;top:300px">MANAGER</div>
<div class="gc r" style="left:292px;top:300px;width:50px"><i>7839</i></div>
<div class="gc" style="left:349.5px;top:300px"><i>1981</i><b>/</b><i>6</i><b>/</b><i>9</i></div>
<div class="gc r" style="left:438px;top:300px;width:49px"><i>2450</i><b>.</b><i>00</i></div>
<div class="gc r" style="left:555px;top:300px;width:76px"><i>10</i></div>
<div class="a" style="left:425px;top:302px;width:11px;height:9px;background:#efefef"></div>
<div class="a" style="left:428px;top:305px;width:5px;height:1px;background:#000"></div>
<div class="a" style="left:429px;top:306px;width:3px;height:1px;background:#000"></div>
<div class="a" style="left:430px;top:307px;width:1px;height:1px;background:#000"></div>
<div class="gc r" style="left:34px;top:318px;width:24px"><i>8</i></div>
<div class="gc r" style="left:63px;top:318px;width:68px"><i>7788</i></div>
<div class="gc" style="left:138.5px;top:318px">SCOTT</div>
<div class="gc" style="left:209.5px;top:318px">ANALYST</div>
<div class="gc r" style="left:292px;top:318px;width:50px"><i>7566</i></div>
<div class="gc" style="left:349.5px;top:318px"><i>1987</i><b>/</b><i>4</i><b>/</b><i>19</i></div>
<div class="gc r" style="left:438px;top:318px;width:49px"><i>3000</i><b>.</b><i>00</i></div>
<div class="gc r" style="left:555px;top:318px;width:76px"><i>20</i></div>
<div class="a" style="left:425px;top:320px;width:11px;height:9px;background:#efefef"></div>
<div class="a" style="left:428px;top:323px;width:5px;height:1px;background:#000"></div>
<div class="a" style="left:429px;top:324px;width:3px;height:1px;background:#000"></div>
<div class="a" style="left:430px;top:325px;width:1px;height:1px;background:#000"></div>
<div class="gc r" style="left:34px;top:336px;width:24px"><i>9</i></div>
<div class="gc r" style="left:63px;top:336px;width:68px"><i>7839</i></div>
<div class="gc" style="left:138.5px;top:336px">KING</div>
<div class="gc" style="left:209.5px;top:336px">PRESIDENT</div>
<div class="gc" style="left:349.5px;top:336px"><i>1981</i><b>/</b><i>11</i><b>/</b><i>17</i></div>
<div class="gc r" style="left:438px;top:336px;width:49px"><i>5000</i><b>.</b><i>00</i></div>
<div class="gc r" style="left:555px;top:336px;width:76px"><i>10</i></div>
<div class="a" style="left:425px;top:338px;width:11px;height:9px;background:#efefef"></div>
<div class="a" style="left:428px;top:341px;width:5px;height:1px;background:#000"></div>
<div class="a" style="left:429px;top:342px;width:3px;height:1px;background:#000"></div>
<div class="a" style="left:430px;top:343px;width:1px;height:1px;background:#000"></div>
<div class="gc r" style="left:34px;top:354px;width:24px"><i>10</i></div>
<div class="gc r" style="left:63px;top:354px;width:68px"><i>7844</i></div>
<div class="gc" style="left:138.5px;top:354px">TURNER</div>
<div class="gc" style="left:209.5px;top:354px">SALESMAN</div>
<div class="gc r" style="left:292px;top:354px;width:50px"><i>7698</i></div>
<div class="gc" style="left:349.5px;top:354px"><i>1981</i><b>/</b><i>9</i><b>/</b><i>8</i></div>
<div class="gc r" style="left:438px;top:354px;width:49px"><i>1500</i><b>.</b><i>00</i></div>
<div class="gc r" style="left:491px;top:354px;width:60px"><i>0</i><b>.</b><i>00</i></div>
<div class="gc r" style="left:555px;top:354px;width:76px"><i>30</i></div>
<div class="a" style="left:425px;top:356px;width:11px;height:9px;background:#efefef"></div>
<div class="a" style="left:428px;top:359px;width:5px;height:1px;background:#000"></div>
<div class="a" style="left:429px;top:360px;width:3px;height:1px;background:#000"></div>
<div class="a" style="left:430px;top:361px;width:1px;height:1px;background:#000"></div>
<div class="gc r" style="left:34px;top:372px;width:24px"><i>11</i></div>
<div class="gc r" style="left:63px;top:372px;width:68px"><i>7876</i></div>
<div class="gc" style="left:138.5px;top:372px">ADAMS</div>
<div class="gc" style="left:209.5px;top:372px">CLERK</div>
<div class="gc r" style="left:292px;top:372px;width:50px"><i>7788</i></div>
<div class="gc" style="left:349.5px;top:372px"><i>1987</i><b>/</b><i>5</i><b>/</b><i>23</i></div>
<div class="gc r" style="left:438px;top:372px;width:49px"><i>1100</i><b>.</b><i>00</i></div>
<div class="gc r" style="left:555px;top:372px;width:76px"><i>20</i></div>
<div class="a" style="left:425px;top:374px;width:11px;height:9px;background:#efefef"></div>
<div class="a" style="left:428px;top:377px;width:5px;height:1px;background:#000"></div>
<div class="a" style="left:429px;top:378px;width:3px;height:1px;background:#000"></div>
<div class="a" style="left:430px;top:379px;width:1px;height:1px;background:#000"></div>
<div class="gc r" style="left:34px;top:390px;width:24px"><i>12</i></div>
<div class="gc r" style="left:63px;top:390px;width:68px"><i>7900</i></div>
<div class="gc" style="left:138.5px;top:390px">JAMES</div>
<div class="gc" style="left:209.5px;top:390px">CLERK</div>
<div class="gc r" style="left:292px;top:390px;width:50px"><i>7698</i></div>
<div class="gc" style="left:349.5px;top:390px"><i>1981</i><b>/</b><i>12</i><b>/</b><i>3</i></div>
<div class="gc r" style="left:438px;top:390px;width:49px"><i>950</i><b>.</b><i>00</i></div>
<div class="gc r" style="left:555px;top:390px;width:76px"><i>30</i></div>
<div class="a" style="left:425px;top:392px;width:11px;height:9px;background:#efefef"></div>
<div class="a" style="left:428px;top:395px;width:5px;height:1px;background:#000"></div>
<div class="a" style="left:429px;top:396px;width:3px;height:1px;background:#000"></div>
<div class="a" style="left:430px;top:397px;width:1px;height:1px;background:#000"></div>
<div class="gc r" style="left:34px;top:408px;width:24px"><i>13</i></div>
<div class="gc r" style="left:63px;top:408px;width:68px"><i>7902</i></div>
<div class="gc" style="left:138.5px;top:408px">FORD</div>
<div class="gc" style="left:209.5px;top:408px">ANALYST</div>
<div class="gc r" style="left:292px;top:408px;width:50px"><i>7566</i></div>
<div class="gc" style="left:349.5px;top:408px"><i>1981</i><b>/</b><i>12</i><b>/</b><i>3</i></div>
<div class="gc r" style="left:438px;top:408px;width:49px"><i>3000</i><b>.</b><i>00</i></div>
<div class="gc r" style="left:555px;top:408px;width:76px"><i>20</i></div>
<div class="a" style="left:425px;top:410px;width:11px;height:9px;background:#efefef"></div>
<div class="a" style="left:428px;top:413px;width:5px;height:1px;background:#000"></div>
<div class="a" style="left:429px;top:414px;width:3px;height:1px;background:#000"></div>
<div class="a" style="left:430px;top:415px;width:1px;height:1px;background:#000"></div>
<div class="gc r" style="left:34px;top:426px;width:24px"><i>14</i></div>
<div class="gc r" style="left:63px;top:426px;width:68px"><i>7934</i></div>
<div class="gc" style="left:138.5px;top:426px">MILLER</div>
<div class="gc" style="left:209.5px;top:426px">CLERK</div>
<div class="gc r" style="left:292px;top:426px;width:50px"><i>7782</i></div>
<div class="gc" style="left:349.5px;top:426px"><i>1982</i><b>/</b><i>1</i><b>/</b><i>23</i></div>
<div class="gc r" style="left:438px;top:426px;width:49px"><i>1300</i><b>.</b><i>00</i></div>
<div class="gc r" style="left:555px;top:426px;width:76px"><i>10</i></div>
<div class="a" style="left:425px;top:428px;width:11px;height:9px;background:#efefef"></div>
<div class="a" style="left:428px;top:431px;width:5px;height:1px;background:#000"></div>
<div class="a" style="left:429px;top:432px;width:3px;height:1px;background:#000"></div>
<div class="a" style="left:430px;top:433px;width:1px;height:1px;background:#000"></div>
<svg class="a" style="left:25px;top:195px" width="8" height="12"><path d="M0 0L6.3 5.5L0 11Z" fill="#000"/></svg>

<!-- status bar -->
<div class="a" style="left:10px;top:457px;width:934px;height:1px;background:#8f8f8f"></div>
<div class="a" style="left:10px;top:458px;width:934px;height:18px;background:#efecea;border-top:1px solid #fff;border-left:1px solid #fff;border-bottom:1px solid #fff"></div>
<div class="a" style="left:172px;top:459px;width:137px;height:16px;background:#f1f1f1"></div>
<div class="a" style="left:11px;top:459px;width:21px;height:16px;background:#fbf9f2"></div>
<div class="a" style="left:13px;top:460px;width:18px;height:5px;background:#0000ff"></div>
<div class="a" style="left:13px;top:469px;width:18px;height:5px;background:#000"></div>
<svg class="a" style="left:34px;top:459px" width="16" height="15" viewBox="34 459 16 15">
<path d="M39.6 464.6A4.2 4.2 0 1 0 46.2 466.6" fill="none" stroke="#000" stroke-width="2.1"/>
<path d="M36.8 461.8H42.2V467.2Z" fill="#000"/>
<path d="M43 461.8L47.4 464.4 43 467Z" fill="#ff0000"/>
</svg>
<div class="a" style="left:51px;top:459px;width:1px;height:16px;background:#d2d2d2"></div>
<div class="a" style="left:101px;top:459px;width:1px;height:16px;background:#d2d2d2"></div>
<div class="a" style="left:171px;top:459px;width:1px;height:16px;background:#d2d2d2"></div>
<div class="a" style="left:309px;top:459px;width:1px;height:16px;background:#d2d2d2"></div>
<svg class="a" style="left:178px;top:464px" width="10" height="6" viewBox="178 464 10 6"><path d="M179 465H186L182.5 469Z" fill="#000"/></svg>
<svg class="a" style="left:932px;top:464px" width="12" height="12" viewBox="932 464 12 12" shape-rendering="crispEdges"><rect x="940" y="466" width="2" height="2" fill="#fff"/><rect x="941" y="467" width="1" height="1" fill="#808080"/><rect x="940" y="467" width="1" height="1" fill="#c8c8c8"/><rect x="941" y="466" width="1" height="1" fill="#c8c8c8"/><rect x="937" y="469" width="2" height="2" fill="#fff"/><rect x="938" y="470" width="1" height="1" fill="#808080"/><rect x="937" y="470" width="1" height="1" fill="#c8c8c8"/><rect x="938" y="469" width="1" height="1" fill="#c8c8c8"/><rect x="940" y="469" width="2" height="2" fill="#fff"/><rect x="941" y="470" width="1" height="1" fill="#808080"/><rect x="940" y="470" width="1" height="1" fill="#c8c8c8"/><rect x="941" y="469" width="1" height="1" fill="#c8c8c8"/><rect x="934" y="472" width="2" height="2" fill="#fff"/><rect x="935" y="473" width="1" height="1" fill="#808080"/><rect x="934" y="473" width="1" height="1" fill="#c8c8c8"/><rect x="935" y="472" width="1" height="1" fill="#c8c8c8"/><rect x="937" y="472" width="2" height="2" fill="#fff"/><rect x="938" y="473" width="1" height="1" fill="#808080"/><rect x="937" y="473" width="1" height="1" fill="#c8c8c8"/><rect x="938" y="472" width="1" height="1" fill="#c8c8c8"/><rect x="940" y="472" width="2" height="2" fill="#fff"/><rect x="941" y="473" width="1" height="1" fill="#808080"/><rect x="940" y="473" width="1" height="1" fill="#c8c8c8"/><rect x="941" y="472" width="1" height="1" fill="#c8c8c8"/></svg>
<div class="sb" style="left:56px;top:461px;transform:scaleX(.8);letter-spacing:1.3px">1:19</div>
<div class="sb" style="left:192px;top:461px;transform:scaleX(.8);letter-spacing:.8px">scott@ORACLE</div>
<div class="sb" style="left:313px;top:461px;transform:scaleX(.8);letter-spacing:.74px">14 rows selected in 0.172 seconds</div>
</body></html>
